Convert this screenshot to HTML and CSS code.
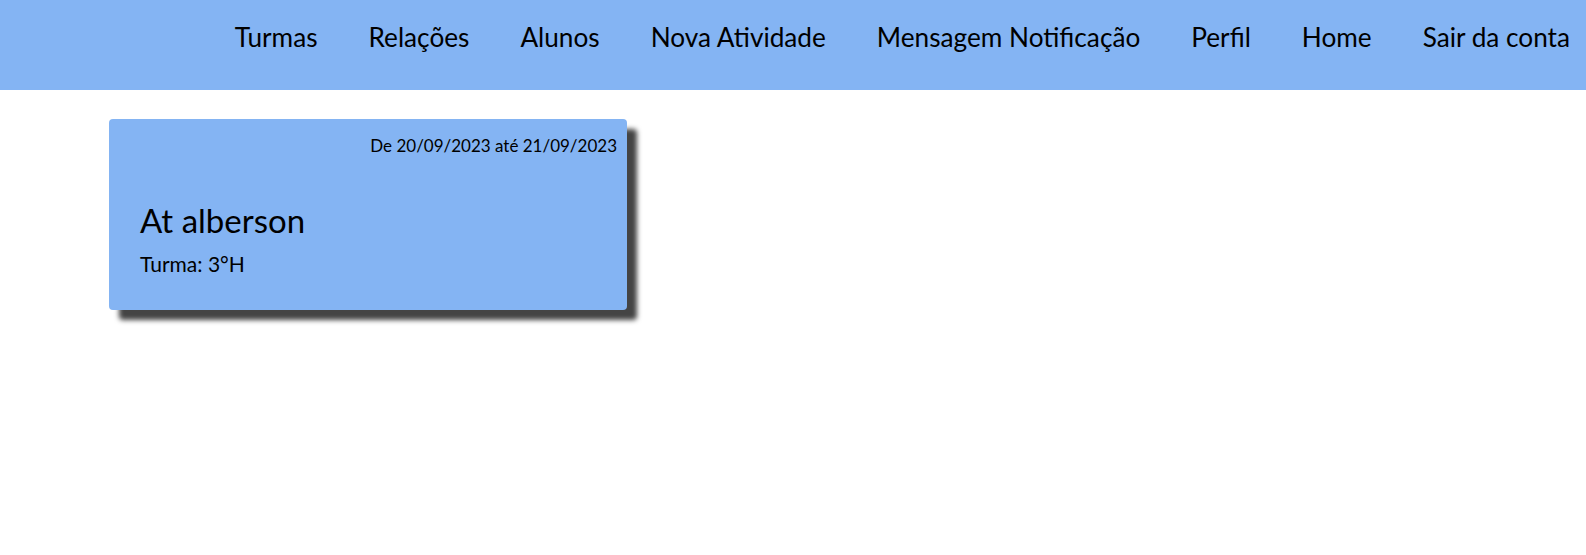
FILE: index.html
```html
<!DOCTYPE html>
<html lang="pt-BR">
<head>
<meta charset="utf-8">
<title>Atividades</title>
<link rel="stylesheet" href="styles.css">
</head>
<body>
<header class="topbar">
  <nav class="nav">
    <a class="nav-link" href="#">Turmas</a>
    <a class="nav-link" href="#">Relações</a>
    <a class="nav-link" href="#">Alunos</a>
    <a class="nav-link" href="#">Nova Atividade</a>
    <a class="nav-link" href="#">Mensagem Notificação</a>
    <a class="nav-link" href="#">Perfil</a>
    <a class="nav-link" href="#">Home</a>
    <a class="nav-link" href="#">Sair da conta</a>
  </nav>
</header>
<main class="content">
  <article class="card">
    <div class="card-date">De 20/09/2023 até 21/09/2023</div>
    <h2 class="card-title">At alberson</h2>
    <p class="card-class">Turma: 3°H</p>
  </article>
</main>
</body>
</html>
```
FILE: styles.css
```css
html, body {
  margin: 0;
  padding: 0;
  background: #ffffff;
  font-family: "Lato", "Open Sans", sans-serif;
  color: #000;
}
.topbar {
  height: 90px;
  background: #84b4f3;
  box-sizing: border-box;
  padding: 22px 16px 0 0;
}
.nav {
  display: flex;
  justify-content: flex-end;
  gap: 51px;
}
.nav-link {
  color: #000;
  text-decoration: none;
  font-size: 26.2px;
  line-height: 31px;
}
.content {
  padding: 29px 0 40px 109px;
}
.card {
  width: 518px;
  height: 191px;
  box-sizing: border-box;
  background: #84b4f3;
  border-radius: 4px;
  box-shadow: 10px 10px 5px #444444;
  padding: 16px 10px 0 31px;
}
.card-date {
  text-align: right;
  font-size: 17px;
  line-height: 22px;
}
.card-title {
  margin: 43px 0 0;
  font-weight: normal;
  font-size: 33px;
  line-height: 40px;
}
.card-class {
  margin: 11px 0 0;
  font-size: 21px;
  line-height: 26px;
}
```
